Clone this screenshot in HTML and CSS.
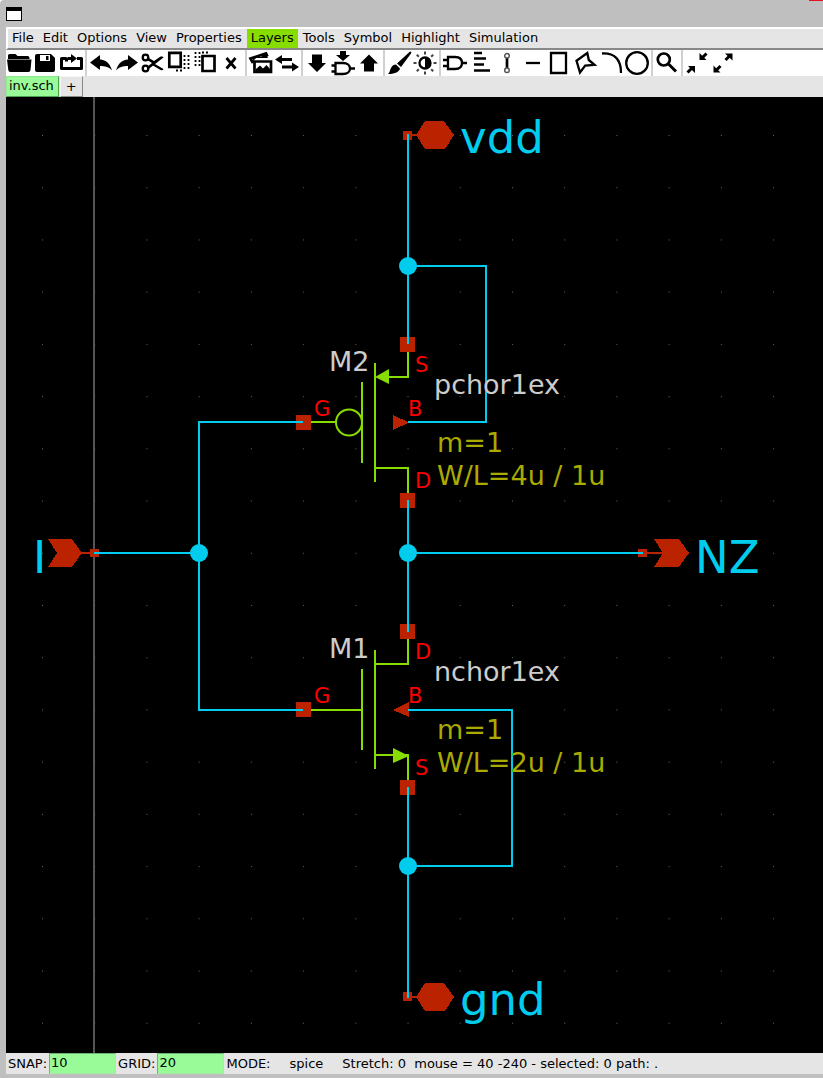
FILE: index.html
```html
<!DOCTYPE html>
<html lang="en">
<head>
<meta charset="utf-8">
<title>inv.sch</title>
<link rel="stylesheet" href="styles.css">
</head>
<body>
<div class="window">
  <header class="titlebar">
    <span class="window-icon"></span>
    <span class="close-edge"></span>
  </header>

  <nav class="menubar">
    <button class="menu">File</button>
    <button class="menu">Edit</button>
    <button class="menu">Options</button>
    <button class="menu">View</button>
    <button class="menu">Properties</button>
    <button class="menu menu-layers">Layers</button>
    <button class="menu">Tools</button>
    <button class="menu">Symbol</button>
    <button class="menu">Highlight</button>
    <button class="menu">Simulation</button>
  </nav>

  <div class="toolbar">
    <div class="group">
      <button class="tool" aria-label="Open"><svg class="icon" viewBox="0 0 26 26"><path class="fill" d="M1 9V5.500q0-1.500 1.500-1.500h6l2 2h10q2 0 2 2v1zM0 9.500h24.500l-1 10.500q-.2 2-2.200 2H3.500q-2 0-2.200-2z"/></svg></button>
      <button class="tool" aria-label="Save"><svg class="icon" viewBox="0 0 26 26"><path class="fill" d="M4 4h14l4 4v12q0 2-2 2H4q-2 0-2-2V6q0-2 2-2z"/><path class="paper" d="M7 5h10v6H7z"/><path class="fill" d="M13 6h2.500v4H13z"/></svg></button>
      <button class="tool" aria-label="Reload"><svg class="icon" viewBox="0 0 26 26"><path class="thick" d="M7.500 8.500H2.500V18.500h20V8.500H18M7.500 7.500v4M9 8.500h4"/><path class="fill" d="M12 4l6 4.500-6 4.500z"/></svg></button>
    </div>
    <div class="group">
      <button class="tool" aria-label="Undo"><svg class="icon" viewBox="0 0 26 26"><path class="fill" d="M2 12.500L12 5v4.500c6 .5 10 4 12 11-3-3.500-7-4.500-12-4.500v4z"/></svg></button>
      <button class="tool" aria-label="Redo"><svg class="icon" viewBox="0 0 26 26"><path class="fill" d="M24 12.500L14 5v4.500c-6 .5-10 4-12 11 3-3.500 7-4.500 12-4.500v4z"/></svg></button>
      <button class="tool" aria-label="Cut"><svg class="icon" viewBox="0 0 26 26"><circle class="line" cx="5.500" cy="7.500" r="2.800"/><circle class="line" cx="5.500" cy="18.500" r="2.800"/><path class="fill" d="M8 7.500l6 3.500L20.500 6.500q3-.5 3 1L8 19.500l-1-2.500 5-4-5-3zM15 14l8.500 5q-.5 1.800-3 1L13 15.500z"/></svg></button>
      <button class="tool" aria-label="Copy"><svg class="icon" viewBox="0 0 26 26"><path class="frame" d="M3.300 2.800h11.400v14H3.300z"/><path class="dots" d="M18.500 5v16M22.500 5v16M10 20.500h7"/></svg></button>
      <button class="tool" aria-label="Paste"><svg class="icon" viewBox="0 0 26 26"><path class="dots" d="M3.500 2v16M7.500 2v16M10 2.500h7"/><path class="frame" d="M10.500 6h12v15h-12z"/></svg></button>
      <button class="tool" aria-label="Delete"><svg class="icon" viewBox="0 0 26 26"><path class="frame" d="M8.500 8l9 10.500M17.500 8l-9 10.500"/></svg></button>
    </div>
    <div class="group">
      <button class="tool" aria-label="Insert symbol"><svg class="icon" viewBox="0 0 26 26"><path class="frame" d="M5 13L2.500 8.500 18 3.500l1.500 3"/><path class="fill" d="M5 9L10 6l3 1 4-4 3 5H8l-3 3z"/><path class="frame" d="M6.500 11.500h16.500V22H6.500z"/><path class="fill" d="M8 21v-2l4-3.500 3 3 3.500-3.500 3.500 4v2z"/></svg></button>
      <button class="tool" aria-label="Swap"><svg class="icon" viewBox="0 0 26 26"><path class="thick" d="M5 9.500h13M8 17h13"/><path class="fill" d="M1 9.500L8 5v9zM25 17l-7-4.500v9z"/></svg></button>
    </div>
    <div class="group">
      <button class="tool" aria-label="Descend"><svg class="icon" viewBox="0 0 26 26"><path class="fill" d="M8 4.500h10v8.500h4l-9 9-9-9h4z"/></svg></button>
      <button class="tool" aria-label="Descend into symbol"><svg class="icon" viewBox="0 0 26 26"><path class="fill" d="M10 1h6v4h4l-7 6-7-6h4z"/><path class="line" d="M5.500 13H13c4.500 0 7 2.500 7 5.500S17.500 24 13 24H5.500zM1.500 15.500h4M1.500 21.500h4M20 18.500h5"/></svg></button>
      <button class="tool" aria-label="Ascend"><svg class="icon" viewBox="0 0 26 26"><path class="fill" d="M8 21.500h10V13.500h4L13 4.500l-9 9h4z"/></svg></button>
    </div>
    <div class="group">
      <button class="tool" aria-label="Highlight net"><svg class="icon" viewBox="0 0 26 26"><path class="fill" d="M24 1.500q2 0 1 2L15 17l-4-3.500zM10 14.500l4 4c-1 4-6 5.500-12 5.500 2-2 1.500-3 3-6 1-2.500 3-3.500 5-3.500z"/></svg></button>
      <button class="tool" aria-label="Toggle colours"><svg class="icon" viewBox="0 0 26 26"><circle class="line" cx="13" cy="13" r="5.500"/><path class="fill" d="M13 7a6 6 0 0 1 0 12z"/><path class="rays" d="M13 1.500v3M13 21.500v3M1.500 13h3M21.500 13h3M4.800 4.800l2 2M19.200 19.200l2 2M4.800 21.200l2-2M19.200 6.800l2-2"/></svg></button>
    </div>
    <div class="group">
      <button class="tool" aria-label="Place component"><svg class="icon" viewBox="0 0 26 26"><path class="line" d="M6 7h7c4.500 0 7 2.500 7 6s-2.500 6-7 6H6zM1 10h5M1 16h5M20 13h5"/></svg></button>
      <button class="tool" aria-label="Place text"><svg class="icon" viewBox="0 0 26 26"><path class="line" d="M6 3h8M6 8.500h12M6 14.500h10M6 20.500h16"/></svg></button>
      <button class="tool" aria-label="Place wire"><svg class="icon" viewBox="0 0 26 26"><path class="frame" d="M13 8v10"/><circle class="ring" cx="13" cy="5.800" r="2.300"/><circle class="ring" cx="13" cy="20.200" r="2.300"/></svg></button>
      <button class="tool" aria-label="Draw line"><svg class="icon" viewBox="0 0 26 26"><path class="line" d="M6 13h14"/></svg></button>
      <button class="tool" aria-label="Draw rectangle"><svg class="icon" viewBox="0 0 26 26"><path class="line" d="M5 3h15v20H5z"/></svg></button>
      <button class="tool" aria-label="Draw polygon"><svg class="icon" viewBox="0 0 26 26"><path class="line" d="M15.300 3l1.500 7 5.700 4.800-9.300.8L8 22.500 4.500 10.700z"/></svg></button>
      <button class="tool" aria-label="Draw arc"><svg class="icon" viewBox="0 0 26 26"><path class="line" d="M4 3.500Q23 2.500 23 23"/></svg></button>
      <button class="tool" aria-label="Draw circle"><svg class="icon" viewBox="0 0 26 26"><circle class="line" cx="13" cy="13" r="10.800"/></svg></button>
    </div>
    <div class="group">
      <button class="tool" aria-label="Zoom"><svg class="icon" viewBox="0 0 26 26"><circle class="frame" cx="9.800" cy="9.500" r="6"/><path class="thick" d="M14.500 14l7.500 7.500"/></svg></button>
    </div>
    <div class="group">
      <button class="tool" aria-label="Zoom out"><svg class="icon" viewBox="0 0 26 26"><path class="thick" d="M3.500 22.500l5-5M22.500 3.500l-5 5"/><path class="fill" d="M4 16h7v7zM15.500 10V3l7 7z"/></svg></button>
      <button class="tool" aria-label="Zoom in"><svg class="icon" viewBox="0 0 26 26"><path class="thick" d="M15.500 10l5-5M10.500 16l-5 5"/><path class="fill" d="M15 3.500h7.500v7zM3.500 22.500v-7l7 7z"/></svg></button>
    </div>
  </div>

  <div class="tabs">
    <button class="tab tab-active">inv.sch</button>
    <button class="tab">+</button>
  </div>

  <main class="canvas">
    <svg class="schematic" role="img" aria-label="Inverter schematic">
      <defs>
        <pattern id="grid" x="36" y="38" width="52.22" height="52.22" patternUnits="userSpaceOnUse">
          <rect class="grid-dot" width="1" height="1"/>
        </pattern>
      </defs>
      <rect width="100%" height="100%" fill="url(#grid)"/>
      <path class="axis" d="M88 0v4000"/>
      <g transform="translate(-6 -97)">
        <g class="pin">
          <path d="M403 131h9v9h-9zM416 135l9-14h19l10 14-9 14h-20zM403 992h9v9h-9zM416 997l9-14h19l10 14-9 14h-20z"/>
          <path d="M90 549h9v8h-9zM48 539h24l10 14-10 14H48l9-14zM638 549h9v8h-9zM654 539h25l10 14-10 14h-25l9-14z"/>
          <path d="M410 134h8v2h-8zM410 996h8v2h-8zM80 552h12v2H80zM645 552h20v2h-20z"/>
          <path d="M400 337h15v15h-15zM400 493h15v15h-15zM296 415h15v15h-15zM393 415l16 7.500-16 7.500z"/>
          <path d="M400 624h15v15h-15zM400 780h15v15h-15zM296 702h15v15h-15zM409 702l-16 8 16 7z"/>
        </g>
        <g class="device">
          <path d="M311 422h25M362 382v81M375 363v119M387 377h21v-25M375 468h33v25"/>
          <circle cx="349" cy="422.500" r="13"/>
          <path d="M311 710h50M362 669v81M375 650v119M375 664h33v-25M375 755h33v25"/>
          <path class="arrow" d="M375 377l14-8v15zM409 756l-16-8v15z"/>
        </g>
        <path class="wire" d="M408 134v210M408 266h78v156h-78M303 422H199v288h104M94 553h105M408 500v132M408 553h235M408 710h104v156H408M408 787v211"/>
        <g class="node">
          <circle cx="408" cy="266" r="9"/>
          <circle cx="199" cy="553" r="9"/>
          <circle cx="408" cy="553" r="9"/>
          <circle cx="408" cy="866" r="9"/>
        </g>
        <g class="port">
          <text x="460" y="153">vdd</text>
          <text x="460" y="1015">gnd</text>
          <text x="33" y="573">I</text>
          <text x="695" y="573">NZ</text>
        </g>
        <g class="name">
          <text x="329" y="371">M2</text>
          <text x="434" y="394">pchor1ex</text>
          <text x="329" y="658">M1</text>
          <text x="434" y="681">nchor1ex</text>
        </g>
        <g class="value">
          <text x="437" y="452">m=1</text>
          <text x="437" y="485">W/L=4u / 1u</text>
          <text x="437" y="739">m=1</text>
          <text x="437" y="772">W/L=2u / 1u</text>
        </g>
        <g class="terminal">
          <text x="314" y="416">G</text>
          <text x="415" y="372">S</text>
          <text x="408" y="416">B</text>
          <text x="415" y="488">D</text>
          <text x="314" y="703">G</text>
          <text x="415" y="659">D</text>
          <text x="408" y="703">B</text>
          <text x="415" y="775">S</text>
        </g>
      </g>
    </svg>
  </main>

  <footer class="status">
    <label for="snap">SNAP:</label>
    <input class="field" id="snap" value="10">
    <label for="gridstep">GRID:</label>
    <input class="field" id="gridstep" value="20">
    <span>MODE:</span>
    <span class="mode">spice</span>
    <span class="info">Stretch: 0  mouse = 40 -240 - selected: 0 path: .</span>
  </footer>
</div>
</body>
</html>
```

FILE: styles.css
```css
* {
  box-sizing: border-box;
}

body {
  margin: 0;
  background: #fff;
  font-family: "DejaVu Sans", sans-serif;
  font-size: 13px;
  color: #000;
}

button,
input {
  font: inherit;
  color: inherit;
  margin: 0;
  border: 0;
  border-radius: 0;
  padding: 0;
  background: none;
}

.window {
  display: flex;
  flex-direction: column;
  min-height: 100vh;
  padding: 0 0 4px 6px;
  background: #bfbfbf;
  border-top-left-radius: 4px;
}

.titlebar {
  display: flex;
  justify-content: space-between;
  align-items: flex-start;
  height: 27px;
}

.window-icon {
  width: 16px;
  height: 14px;
  margin-top: 7px;
  background: #fff;
  border: 1px solid #000;
  border-top-width: 4px;
}

.close-edge {
  width: 14px;
  height: 1px;
  background: #e81123;
}

.menubar {
  display: flex;
  gap: 1px;
  height: 23px;
  background: #e5e5e5;
  border-top: 2px solid #fff;
  border-left: 2px solid #fff;
  border-bottom: 2px solid #888;
}

.menu {
  padding: 0 4px 2px;
  line-height: 17px;
  white-space: nowrap;
}

.menu-layers {
  background: #88dd00;
}

.toolbar {
  display: flex;
  height: 26px;
  background: #fff;
}

.group {
  display: flex;
  padding: 0 0 0 1px;
  border-right: 2px solid #d0d0d0;
}

.group + .group {
  padding: 0 1px;
}

.group:last-child {
  border-right: 0;
}

.tool {
  width: 26px;
  height: 26px;
}

.icon {
  display: block;
  width: 26px;
  height: 26px;
  fill: none;
  stroke: none;
}

.fill {
  fill: #000;
}

.paper {
  fill: #fff;
}

.line,
.frame,
.thick,
.dots,
.ring,
.rays {
  stroke: #000;
  stroke-width: 2.3;
}

.frame {
  stroke-width: 2.7;
}

.thick {
  stroke-width: 3;
  stroke-linejoin: round;
}

.dots {
  stroke-width: 1.8;
  stroke-dasharray: 2 2;
}

.ring {
  stroke: #555;
  stroke-width: 1.5;
}

.rays {
  stroke: #444;
  stroke-width: 2;
}

.tabs {
  display: flex;
  gap: 1px;
  height: 21px;
  background: #e5e5e5;
}

.tab {
  padding: 0 5px;
  line-height: 19px;
  border: 1px solid #f4f4f4;
  border-right-color: #888;
  border-bottom-color: #888;
}

.tab-active {
  padding: 0 4px 2px 2px;
  line-height: 17px;
  background: #98fb98;
  border-color: #90e890 #50a050 #50a050 #90e890;
}

.canvas {
  display: flex;
  flex: 1;
  background: #000;
}

.schematic {
  flex: 1;
  width: 100%;
  min-height: 956px;
  overflow: hidden;
}

.grid-dot {
  fill: #666;
}

.axis {
  stroke: #555;
  stroke-width: 2;
}

.pin {
  fill: #bb2200;
  shape-rendering: crispEdges;
}

.device {
  fill: none;
  stroke: #88dd00;
  stroke-width: 2;
}

.arrow {
  fill: #88dd00;
  stroke: none;
}

.wire {
  fill: none;
  stroke: #00ccee;
  stroke-width: 2;
}

.node {
  fill: #00ccee;
}

.port {
  font-size: 45px;
  fill: #00ccee;
}

.name {
  font-size: 27px;
  fill: #cccccc;
}

.value {
  font-size: 27px;
  fill: #aaaa00;
}

.terminal {
  font-size: 21px;
  fill: #ff0000;
}

.status {
  display: flex;
  gap: 2px;
  height: 21px;
  padding-left: 2px;
  background: #e5e5e5;
  line-height: 21px;
  white-space: pre;
}

.field {
  width: 67px;
  height: 21px;
  padding: 0 1px 2px;
  background: #98fb98;
  border: 1px solid #70b070;
  border-right-color: #a8e8a8;
  border-bottom-color: #a8e8a8;
}

.mode,
.info {
  margin-left: 17px;
}
```
